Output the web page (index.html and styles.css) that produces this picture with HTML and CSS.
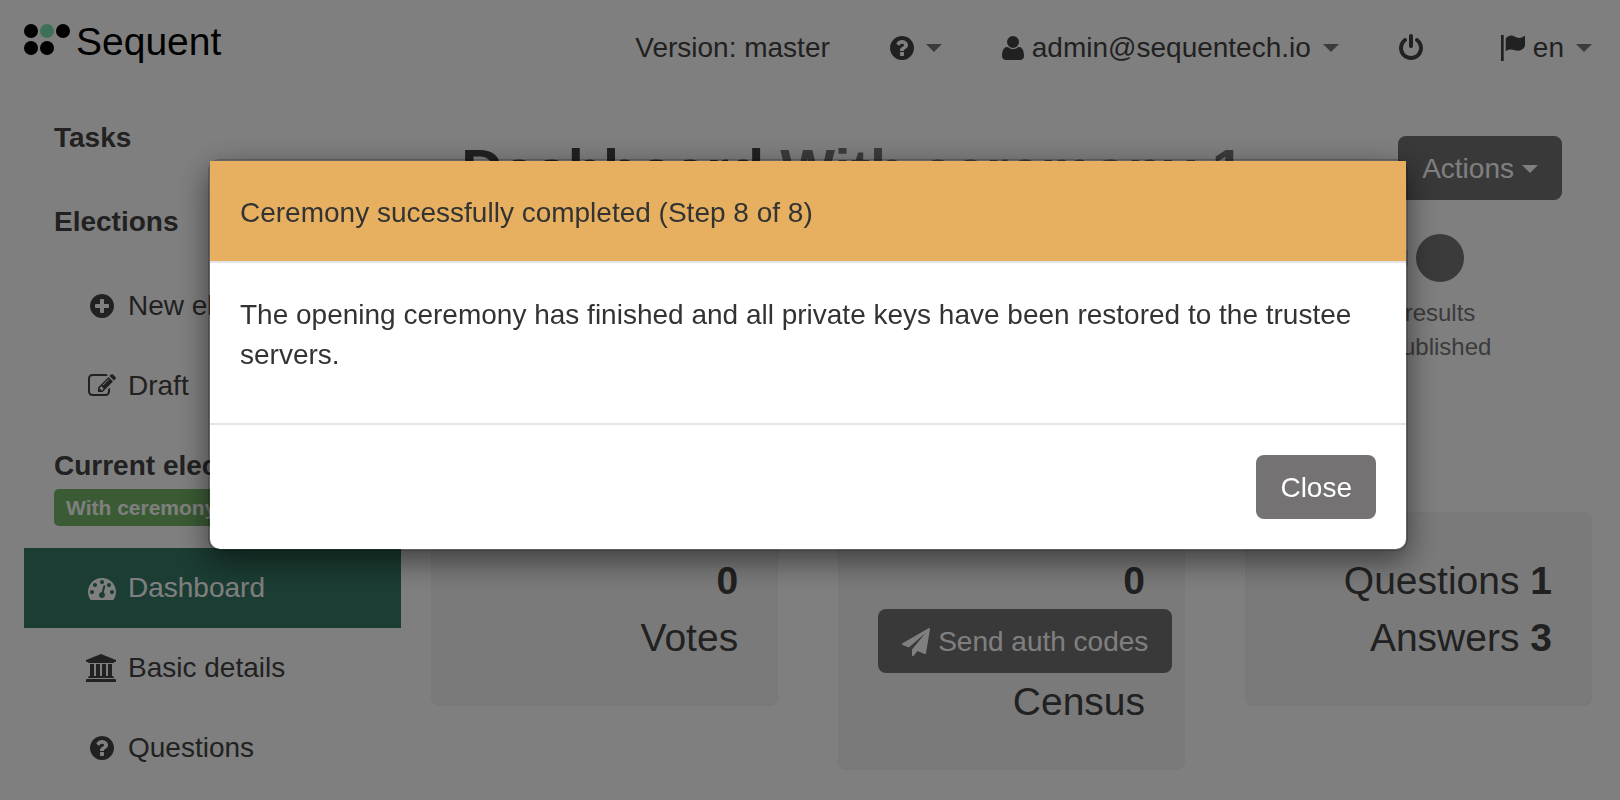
FILE: index.html
```html
<!DOCTYPE html>
<html lang="en">
<head>
<meta charset="utf-8">
<title>Sequent - Dashboard</title>
<link rel="stylesheet" href="styles.css">
</head>
<body>
<svg class="sprite" aria-hidden="true">
  <symbol id="help" viewBox="128 0 1536 1792"><path d="M1024 1376v-192q0-14-9-23t-23-9h-192q-14 0-23 9t-9 23v192q0 14 9 23t23 9h192q14 0 23-9t9-23zm256-672q0-88-55.500-163t-138.500-116-170.500-41q-243 0-371 213-15 24 8 42l132 100q7 6 19 6 16 0 25-12 53-68 86-92 34-24 86-24 48 0 85.500 26t37.500 59q0 38-20 61t-68 45q-63 28-115.500 86.500t-52.500 125.500v36q0 14 9 23t23 9h192q14 0 23-9t9-23q0-19 21.500-49.500t54.500-49.500q32-18 49-28.500t46-35 44.500-48 28-60.500 12.500-81zm384 192q0 209-103 385.500t-279.500 279.500-385.500 103-385.500-103-279.500-279.500-103-385.500 103-385.500 279.500-279.500 385.500-103 385.500 103 279.500 279.500 103 385.500z"/></symbol>
  <symbol id="plus" viewBox="0 0 1792 1792"><path d="M1344 960v-128q0-26-19-45t-45-19h-256v-256q0-26-19-45t-45-19h-128q-26 0-45 19t-19 45v256h-256q-26 0-45 19t-19 45v128q0 26 19 45t45 19h256v256q0 26 19 45t45 19h128q26 0 45-19t19-45v-256h256q26 0 45-19t19-45zm320-64q0 209-103 385.500t-279.500 279.500-385.500 103-385.500-103-279.500-279.500-103-385.500 103-385.500 279.500-279.500 385.500-103 385.500 103 279.500 279.500 103 385.500z"/></symbol>
  <symbol id="power" viewBox="128 0 1536 1792"><path d="M1664 896q0 156-61 298t-164 245-245 164-298 61-298-61-245-164-164-245-61-298q0-182 80.500-343t226.500-270q43-32 95.500-25t83.500 50q32 42 24.500 94.500t-49.500 84.500q-98 74-151.500 181t-53.500 228q0 104 40.500 198.500t109.500 163.500 163.500 109.500 198.500 40.500 198.500-40.500 163.500-109.500 109.500-163.500 40.500-198.500q0-121-53.500-228t-151.500-181q-42-32-49.500-84.500t24.500-94.500q31-43 84-50t95 25q146 109 226.500 270t80.500 343zm-640-768v640q0 52-38 90t-90 38-90-38-38-90v-640q0-52 38-90t90-38 90 38 38 90z"/></symbol>
  <symbol id="user" viewBox="192 0 1408 1792"><path d="M1600 1405q0 120-73 189.500t-194 69.500h-874q-121 0-194-69.500t-73-189.500q0-53 3.500-103.500t14-109 26.500-108.500 43-97.500 62-81 85.500-53.500 111.500-20q9 0 42 21.500t74.500 48 108 48 133.500 21.500 133.500-21.500 108-48 74.500-48 42-21.500q61 0 111.500 20t85.500 53.500 62 81 43 97.500 26.500 108.500 14 109 3.500 103.500zm-320-893q0 159-112.500 271.500t-271.500 112.500-271.500-112.500-112.500-271.500 112.500-271.500 271.500-112.500 271.500 112.500 112.500 271.500z"/></symbol>
  <symbol id="flag" viewBox="0 0 24 28"><path d="M0 1h2.700v26H0zM4.700 4.500C8 .9 11 1 14 2.800c3 1.700 6.500 1.500 9.300-.8q.7-.5.700.3v9.900c-3 4.800-6.500 5.200-10 4.100-3.300-1.300-6-1.300-8.800.6q-.5.300-.5-.4z"/></symbol>
  <symbol id="edit" viewBox="0 0 1792 1792"><path d="M888 1184l116-116-152-152-116 116v56h96v96h56zm440-720q-16-16-33 1l-350 350q-17 17-1 33t33-1l350-350q17-17 1-33zm80 594v190q0 119-84.500 203.500t-203.500 84.500h-832q-119 0-203.500-84.500t-84.500-203.500v-832q0-119 84.500-203.500t203.500-84.500h832q63 0 117 25 15 7 18 23 3 17-9 29l-49 49q-14 14-32 8-23-6-45-6h-832q-66 0-113 47t-47 113v832q0 66 47 113t113 47h832q66 0 113-47t47-113v-126q0-13 9-22l64-64q15-15 35-7t20 29zm-96-738l288 288-672 672h-288v-288zm444 132l-92 92-288-288 92-92q28-28 68-28t68 28l152 152q28 28 28 68t-28 68z"/></symbol>
  <symbol id="gauge" viewBox="0 0 1792 1792"><path d="M384 1152q0-53-37.500-90.500t-90.500-37.500-90.500 37.500-37.500 90.500 37.500 90.500 90.500 37.500 90.500-37.500 37.500-90.500zm192-448q0-53-37.500-90.500t-90.500-37.500-90.500 37.500-37.500 90.500 37.500 90.500 90.500 37.500 90.500-37.500 37.500-90.500zm428 481l101-382q6-26-7.500-48.500t-38.500-29.500-48 6.500-30 39.500l-101 382q-60 5-107 43.500t-63 98.500q-20 77 20 146t117 89 146-20 89-117q16-60-6-117t-72-91zm660-33q0-53-37.500-90.500t-90.500-37.500-90.500 37.500-37.500 90.500 37.500 90.500 90.500 37.500 90.500-37.500 37.500-90.500zm-640-640q0-53-37.500-90.500t-90.500-37.500-90.500 37.500-37.500 90.500 37.500 90.500 90.500 37.500 90.500-37.500 37.500-90.500zm448 192q0-53-37.500-90.500t-90.500-37.500-90.500 37.500-37.500 90.500 37.500 90.500 90.500 37.500 90.500-37.500 37.500-90.500zm320 448q0 261-141 483-19 29-54 29h-1402q-35 0-54-29-141-221-141-483 0-182 71-348t191-286 286-191 348-71 348 71 286 191 191 286 71 348z"/></symbol>
  <symbol id="bank" viewBox="0 0 30 28"><path d="M15 0l15 6v2h-2q0 1-1 1H3Q2 9 2 8H0V6zM4 10h4v12h2V10h4v12h2V10h4v12h2V10h4v12q2 0 2 2H2q0-2 2-2zM1 25h28q1 0 1 1v2H0v-2q0-1 1-1z"/></symbol>
  <symbol id="plane" viewBox="0 0 1792 1792"><path d="M1764 11q33 24 27 64l-256 1536q-5 29-32 45-14 8-31 8-11 0-24-5l-453-185-242 295q-18 23-49 23-13 0-22-4-19-7-30.500-23.500t-11.500-36.500v-349l864-1059-1069 925-395-162q-37-14-40-55-2-40 32-59l1664-960q15-9 32-9 20 0 36 11z"/></symbol>
</svg>

<header class="navbar">
  <a class="logo" href="#">
    <svg class="logo-mark" viewBox="0 0 46 32" aria-hidden="true">
      <circle cx="7" cy="7" r="7"/><circle class="logo-accent" cx="23" cy="7" r="7"/><circle cx="39" cy="7" r="7"/>
      <circle cx="7" cy="24" r="7"/><circle cx="23" cy="24" r="7"/>
    </svg>
    <span>Sequent</span>
  </a>
  <nav class="nav">
    <span>Version: master</span>
    <a class="nav-help" href="#" aria-label="Help"><svg class="icon icon-narrow"><use href="#help"/></svg><i class="caret"></i></a>
    <a class="nav-link" href="#"><svg class="icon icon-user"><use href="#user"/></svg>admin@sequentech.io<i class="caret"></i></a>
    <a class="nav-power" href="#" aria-label="Log out"><svg class="icon icon-narrow"><use href="#power"/></svg></a>
    <a class="nav-link" href="#"><svg class="icon icon-narrow"><use href="#flag"/></svg>en<i class="caret"></i></a>
  </nav>
</header>

<div class="layout">
  <aside class="sidebar">
    <a class="side-heading" href="#">Tasks</a>
    <a class="side-heading" href="#">Elections</a>
    <a class="side-item" href="#"><svg class="icon"><use href="#plus"/></svg>New election</a>
    <a class="side-item" href="#"><svg class="icon"><use href="#edit"/></svg>Draft</a>
    <div class="current">
      <strong>Current election</strong>
      <span class="badge">With ceremony 1</span>
    </div>
    <a class="side-item active" href="#"><svg class="icon"><use href="#gauge"/></svg>Dashboard</a>
    <a class="side-item" href="#"><svg class="icon icon-bank"><use href="#bank"/></svg>Basic details</a>
    <a class="side-item" href="#"><svg class="icon"><use href="#help"/></svg>Questions</a>
  </aside>

  <main class="main">
    <div class="title-row">
      <h1>Dashboard <small>With ceremony 1</small></h1>
      <button class="btn" type="button">Actions<i class="caret"></i></button>
    </div>
    <div class="timeline">
      <div class="connector"></div>
      <div class="step"><div class="dot"></div>results published</div>
    </div>
    <div class="cards">
      <section class="card"><strong>0</strong><div>Votes</div></section>
      <section class="card"><strong>0</strong>
        <button class="btn" type="button"><svg class="icon"><use href="#plane"/></svg>Send auth codes</button>
        <div>Census</div></section>
      <section class="card"><div>Questions <b>1</b></div><div>Answers <b>3</b></div></section>
    </div>
  </main>
</div>

<div class="backdrop">
  <div class="modal" role="dialog" aria-modal="true" aria-labelledby="modal-title">
    <h2 class="modal-header" id="modal-title">Ceremony sucessfully completed (Step 8 of 8)</h2>
    <div class="modal-body"><p>The opening ceremony has finished and all private keys have been restored to the trustee servers.</p></div>
    <div class="modal-footer"><button class="btn" type="button">Close</button></div>
  </div>
</div>
</body>
</html>
```
FILE: styles.css
```css
* { box-sizing: border-box; }

body {
  margin: 0;
  background: #fff;
  color: #434343;
  font: 28px/40px "Liberation Sans", Arial, sans-serif;
}

a { color: inherit; text-decoration: none; }

.sprite { display: none; }

.icon {
  flex: none;
  width: 28px;
  height: 28px;
  fill: currentColor;
}
.icon-narrow { width: 24px; }
.icon-user { width: 22px; }

.caret {
  flex: none;
  border: 8px solid transparent;
  border-top-color: currentColor;
  border-bottom: 0;
}

.btn {
  display: inline-flex;
  align-items: center;
  gap: 8px;
  padding: 13px 24px 11px;
  border: 0;
  border-radius: 8px;
  background: #747273;
  color: #fff;
  font: inherit;
  line-height: 40px;
  white-space: nowrap;
}

/* Top bar */
.navbar {
  display: flex;
  justify-content: space-between;
  align-items: flex-start;
  height: 96px;
  padding: 18px 28px 0 24px;
}

.logo {
  display: flex;
  gap: 6px;
  color: #000;
  font-size: 39px;
  line-height: 48px;
}
.logo-mark { width: 46px; height: 32px; margin-top: 6px; }
.logo-accent { fill: #7ae2ae; }

.nav {
  display: flex;
  gap: 60px;
  padding-top: 10px;
}
.nav a { display: flex; align-items: center; }
.nav-link { gap: 8px; }
.nav-help { gap: 12px; }
.nav-power { padding-right: 18px; }
.nav .caret { color: #777; }
.nav-link .caret { margin-left: 4px; }

/* Page columns */
.layout {
  display: grid;
  grid-template-columns: 13fr 40fr;
  gap: 30px;
  padding: 0 28px 0 24px;
}

.sidebar { padding-top: 22px; }
.side-heading {
  display: block;
  margin-bottom: 44px;
  padding-left: 30px;
  font-weight: bold;
}
.side-heading + .side-item { margin-top: -20px; }
.side-item {
  display: flex;
  align-items: center;
  gap: 12px;
  padding: 20px 0 20px 64px;
}
.side-item.active { background: #367a66; color: #fff; }
.icon-bank { width: 30px; margin-left: -2px; }
.current {
  display: flex;
  flex-direction: column;
  align-items: flex-start;
  gap: 3px;
  padding: 20px 0 22px 30px;
  white-space: nowrap;
}
.badge {
  padding: 6px 12px;
  border-radius: 5px;
  background: #74b668;
  color: #fff;
  font-size: 21px;
  font-weight: bold;
  line-height: 25px;
}

.main { min-width: 0; padding-top: 40px; }
.title-row {
  display: flex;
  justify-content: space-between;
  align-items: flex-start;
  padding: 0 30px;
}
h1 {
  margin: 0;
  font-size: 58px;
  line-height: 68px;
}
h1 small { color: #777; font-size: inherit; }

.timeline {
  display: flex;
  margin: 30px 100px 148px 30px;
  color: #777;
  font-size: 24px;
  line-height: 34px;
  text-align: center;
}
.connector {
  flex: 1;
  height: 16px;
  margin: 16px -20px 0 0;
  background: #ddd;
}
.step { width: 104px; }
.dot {
  width: 48px;
  height: 48px;
  margin: 0 auto 14px;
  border-radius: 50%;
  background: #777;
}

.cards {
  display: grid;
  grid-template-columns: repeat(3, minmax(0, 1fr));
  align-items: start;
  gap: 60px;
}
.card {
  padding: 38px;
  border: 2px solid #f2f2f2;
  border-radius: 8px;
  background: #f5f5f5;
  font-size: 39px;
  line-height: 57px;
  text-align: right;
}
.card strong { display: block; }
.card .btn { display: flex; width: max-content; font-size: 28px; }

/* Dialog */
.backdrop {
  position: fixed;
  inset: 0;
  padding: 159px 4px 0 0;
  background: rgba(0, 0, 0, 0.5);
}
.modal {
  max-width: 1200px;
  margin: 0 auto;
  border: 2px solid rgba(0, 0, 0, 0.2);
  border-radius: 12px;
  background: #fff;
  background-clip: padding-box;
  box-shadow: 0 10px 30px rgba(0, 0, 0, 0.5);
  color: #333;
}
.modal-header {
  margin: 0;
  padding: 32px 30px 28px;
  border-bottom: 2px solid #e5e5e5;
  background: #e6b060;
  background-clip: padding-box;
  font: inherit;
}
.modal-body { padding: 32px 30px 28px; }
.modal-body p { margin: 0 0 20px; }
.modal-footer {
  display: flex;
  justify-content: flex-end;
  padding: 30px;
  border-top: 2px solid #e5e5e5;
}
```
